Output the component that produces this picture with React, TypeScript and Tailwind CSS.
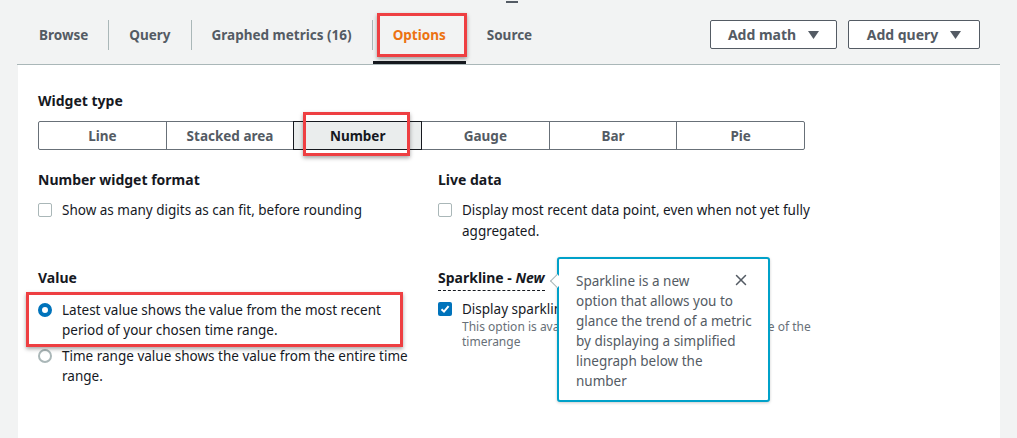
import { X } from 'lucide-react';

const tabs = ['Browse', 'Query', 'Graphed metrics (16)', 'Options', 'Source'];
const types = ['Line', 'Stacked area', 'Number', 'Gauge', 'Bar', 'Pie'];

function Caret() {
  return (
    <svg width="11" height="8" viewBox="0 0 11 8" className="ml-3">
      <path d="M0 0 H11 L5.5 8 Z" fill="#545b64" />
    </svg>
  );
}

function Checkbox({ checked }: { checked?: boolean }) {
  if (checked) {
    return (
      <span className="block w-[14px] h-[14px] rounded-[2px] bg-[#0073bb] flex items-center justify-center shrink-0">
        <svg width="10" height="10" viewBox="0 0 10 10">
          <path d="M1.5 5.2 L4 7.6 L8.6 2.2" stroke="white" strokeWidth="2" fill="none" />
        </svg>
      </span>
    );
  }
  return <span className="block w-[14px] h-[14px] rounded-[2px] border border-[#aab7b8] bg-white shrink-0" />;
}

function Radio({ checked }: { checked?: boolean }) {
  return checked ? (
    <span className="block w-[14px] h-[14px] rounded-full border-[4px] border-[#0073bb] bg-white shrink-0" />
  ) : (
    <span className="block w-[14px] h-[14px] rounded-full border-2 border-[#aab7b8] bg-white shrink-0" />
  );
}

export default function App() {
  return (
    <div className="relative w-[1017px] h-[438px] overflow-hidden bg-[#f2f3f3] text-[13.5px] text-[#16191f]" style={{ fontFamily: '"Noto Sans", "Open Sans", sans-serif' }}>
      <div className="absolute left-[506px] top-[1px] w-[12px] h-[2px] bg-[#545b64]" />

      {/* tabs */}
      <div className="ml-[17px] w-[983px] h-[65px] flex border-b border-[#aab7b8] pl-[2px]">
        {tabs.map((t, i) => (
          <div key={t} className="flex h-full">
            {i > 0 && <div className="w-px h-[30px] bg-[#aab7b8] mt-[20px]" />}
            <div className={`relative flex flex-col px-[20px] ${t === 'Options' ? 'border-b-[3px] border-[#16191f]' : 'border-b-[3px] border-transparent'}`}>
              <div className={`flex-1 flex items-center pt-[10px] font-bold whitespace-nowrap ${t === 'Options' ? 'text-[#ec7211]' : 'text-[#545b64]'}`}>{t}</div>
              {t === 'Options' && (
                <div className="absolute left-[4px] right-[-1px] top-[13px] h-[44px] border-[3px] border-[#ee3f42] shadow-[0_2px_4px_rgba(0,0,0,0.35)]" />
              )}
            </div>
          </div>
        ))}
        <div className="flex-1" />
        <div className="flex gap-[11px] pt-[20px] pr-[20px]">
          <button className="w-[127px] h-[29px] border border-[#545b64] rounded-[2px] bg-white text-[14px] font-bold text-[#545b64] flex items-center justify-center">
            Add math <Caret />
          </button>
          <button className="w-[132px] h-[29px] border border-[#545b64] rounded-[2px] bg-white text-[14px] font-bold text-[#545b64] flex items-center justify-center">
            Add query <Caret />
          </button>
        </div>
      </div>

      {/* panel */}
      <div className="relative ml-[18px] w-[982px] h-[373px] bg-white pl-[20px] pt-[26px]">
        <div className="text-[14px] font-bold leading-[20px]">Widget type</div>
        <div className="mt-[10px] flex w-[767px] h-[29px]">
          {types.map((t, i) => (
            <div
              key={t}
              className={`relative flex-1 flex items-center justify-center pt-px font-bold border ${i > 0 ? '-ml-px' : ''} ${i === 0 ? 'rounded-l-[2px]' : ''} ${i === 5 ? 'rounded-r-[2px]' : ''} ${t === 'Number' ? 'bg-[#eaeded] border-[#16191f] text-[#16191f] z-10' : 'border-[#687078] text-[#545b64]'}`}
            >
              {t}
              {t === 'Number' && (
                <div className="absolute left-[9px] right-[11px] top-[-10px] bottom-[-7px] border-[3px] border-[#ee3f42] shadow-[0_2px_4px_rgba(0,0,0,0.35)]" />
              )}
            </div>
          ))}
        </div>

        <div className="mt-[20px] grid grid-cols-[400px_380px] gap-y-[26px]">
          <div>
            <div className="text-[14px] font-bold leading-[20px]">Number widget format</div>
            <label className="mt-[10px] flex items-start gap-[10px] leading-[20px]">
              <span className="mt-[3px]"><Checkbox /></span>
              <span>Show as many digits as can fit, before rounding</span>
            </label>
          </div>
          <div>
            <div className="text-[14px] font-bold leading-[20px]">Live data</div>
            <label className="mt-[10px] flex items-start gap-[10px] leading-[21px]">
              <span className="mt-[3px]"><Checkbox /></span>
              <span className="whitespace-nowrap">Display most recent data point, even when not yet fully<br />aggregated.</span>
            </label>
          </div>

          <div>
            <div className="text-[14px] font-bold leading-[20px]">Value</div>
            <div className="relative mt-[12px] flex items-start gap-[10px] leading-[20px]">
              <span className="mt-[3px]"><Radio checked /></span>
              <span className="whitespace-nowrap">Latest value shows the value from the most recent<br />period of your chosen time range.</span>
              <div className="absolute left-[-12px] top-[-8px] w-[377px] h-[55px] border-[3px] border-[#ee3f42] shadow-[0_2px_4px_rgba(0,0,0,0.35)]" />
            </div>
            <div className="mt-[6px] flex items-start gap-[10px] leading-[20px]">
              <span className="mt-[3px]"><Radio /></span>
              <span className="whitespace-nowrap">Time range value shows the value from the entire time<br />range.</span>
            </div>
          </div>
          <div>
            <div className="inline-block text-[14px] font-bold leading-[20px] border-b border-dashed border-[#16191f] pb-[2px]">
              Sparkline - <i>New</i>
            </div>
            <div className="mt-[8px] flex items-start gap-[10px]">
              <span className="mt-[3px]"><Checkbox checked /></span>
              <div>
                <div className="leading-[20px]">Display sparkline below the number</div>
                <div className="text-[12px] leading-[15px] text-[#687078] whitespace-nowrap">
                  This option is available for a period under the full range of the
                  <br />
                  timerange
                </div>
              </div>
            </div>
          </div>
        </div>

        {/* popover */}
        <div className="absolute left-[539px] top-[192px] w-[213px] h-[145px] bg-white border-2 border-[#00a1c9] rounded-[3px] pl-[17px] pt-[12px] shadow-[0_1px_3px_rgba(0,0,0,0.2)]">
          <div className="absolute left-[-7px] top-[17px] w-[10px] h-[10px] bg-white border-l border-b border-[#aab7b8] rotate-45" />
          <div className="leading-[20px] text-[#545b64] whitespace-nowrap">
            Sparkline is a new<br />
            option that allows you to<br />
            glance the trend of a metric<br />
            by displaying a simplified<br />
            linegraph below the<br />
            number
          </div>
          <X size={18} strokeWidth={2} color="#545b64" className="absolute right-[18px] top-[12px]" />
        </div>
      </div>
    </div>
  );
}
